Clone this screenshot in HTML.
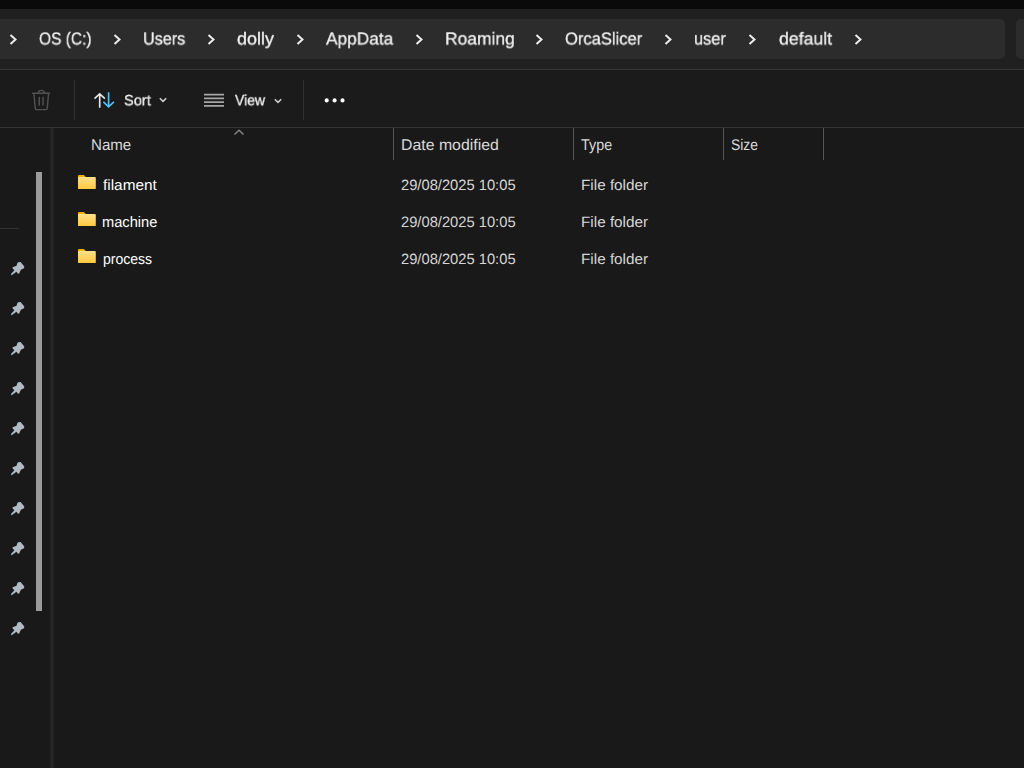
<!DOCTYPE html>
<html>
<head>
<meta charset="utf-8">
<title>default - File Explorer</title>
<style>
  html, body { margin: 0; padding: 0; }
  body {
    width: 1024px; height: 768px; overflow: hidden; position: relative;
    background: #191919;
    font-family: "Liberation Sans", sans-serif;
    color: #ffffff;
  }
  .abs { position: absolute; }
  .g { will-change: transform; -webkit-text-stroke: 0.3px #f4f4f4; }
  .t { position: absolute; white-space: nowrap; line-height: 1; transform-origin: 0 0; text-rendering: geometricPrecision; }

  /* top strips */
  #topblack { left: 0; top: 0; width: 1024px; height: 9px; background: #0a0a0a; }
  #addrstrip { left: 0; top: 9px; width: 1024px; height: 60px; background: #202020; }
  #addrbox { left: -8px; top: 19px; width: 1013px; height: 40px; background: #2c2c2c; border-radius: 5px; }
  #searchbox { left: 1015.5px; top: 19px; width: 20px; height: 40px; background: #2c2c2c; border-radius: 5px; }
  #addrline { left: 0; top: 69px; width: 1024px; height: 1px; background: #383838; }
  #toolbar { left: 0; top: 70px; width: 1024px; height: 57px; background: #1b1b1b; }
  #toolline { left: 0; top: 127px; width: 1024px; height: 1px; background: #343434; }

  /* breadcrumb */
  .bc { font-size: 18px; color: #f2f2f2; top: 30px; }
  .chev { position: absolute; top: 34.3px; width: 8px; height: 11px; }

  /* toolbar */
  .tb { font-size: 15px; color: #f2f2f2; top: 93px; }
  .vsep { position: absolute; top: 80px; width: 1px; height: 40px; background: #303030; }

  /* sidebar */
  #navdiv { left: 50px; top: 128px; width: 4px; height: 640px; background: linear-gradient(to right, #1d1d1d 0%, #252525 20%, #272727 50%, #262626 75%, #1f1f1f 100%); }
  #scroll { left: 36px; top: 172px; width: 6px; height: 439px; background: #9b9b9b; }
  #navline { left: 0; top: 228px; width: 19px; height: 1px; background: #323232; }
  .pin { position: absolute; left: 10px; width: 16px; height: 16px; }

  /* list */
  .hsep { position: absolute; top: 128px; width: 1px; height: 32px; background: #555555; }
  .hd { font-size: 15px; color: #dcdcdc; top: 137px; }
  .fn { font-size: 15px; color: #ffffff; }
  .dt { font-size: 15px; color: #d4d4d4; }
  .folder { position: absolute; left: 78px; width: 17.9px; height: 14.2px; }
</style>
</head>
<body>
<div class="abs" id="topblack"></div>
<div class="abs" id="addrstrip"></div>
<div class="abs" id="addrbox"></div>
<div class="abs" id="searchbox"></div>
<div class="abs" id="addrline"></div>
<div class="abs" id="toolbar"></div>
<div class="abs" id="toolline"></div>

<!-- breadcrumb -->
<svg class="chev" style="left:9px" viewBox="0 0 8 11"><path d="M1.5 1 L6.5 5.5 L1.5 10" fill="none" stroke="#ececec" stroke-width="2"/></svg>
<svg class="chev" style="left:113px" viewBox="0 0 8 11"><path d="M1.5 1 L6.5 5.5 L1.5 10" fill="none" stroke="#ececec" stroke-width="2"/></svg>
<svg class="chev" style="left:207px" viewBox="0 0 8 11"><path d="M1.5 1 L6.5 5.5 L1.5 10" fill="none" stroke="#ececec" stroke-width="2"/></svg>
<svg class="chev" style="left:296px" viewBox="0 0 8 11"><path d="M1.5 1 L6.5 5.5 L1.5 10" fill="none" stroke="#ececec" stroke-width="2"/></svg>
<svg class="chev" style="left:415px" viewBox="0 0 8 11"><path d="M1.5 1 L6.5 5.5 L1.5 10" fill="none" stroke="#ececec" stroke-width="2"/></svg>
<svg class="chev" style="left:535px" viewBox="0 0 8 11"><path d="M1.5 1 L6.5 5.5 L1.5 10" fill="none" stroke="#ececec" stroke-width="2"/></svg>
<svg class="chev" style="left:664px" viewBox="0 0 8 11"><path d="M1.5 1 L6.5 5.5 L1.5 10" fill="none" stroke="#ececec" stroke-width="2"/></svg>
<svg class="chev" style="left:748px" viewBox="0 0 8 11"><path d="M1.5 1 L6.5 5.5 L1.5 10" fill="none" stroke="#ececec" stroke-width="2"/></svg>
<svg class="chev" style="left:854px" viewBox="0 0 8 11"><path d="M1.5 1 L6.5 5.5 L1.5 10" fill="none" stroke="#ececec" stroke-width="2"/></svg>

<!-- toolbar -->
<svg class="abs" id="trash" style="left:31px;top:89px" width="20" height="22" viewBox="0 0 20 22">
  <path d="M1.500 4.300 H18.500 M7.200 4.300 C7.200 2.400 8.600 1.400 10.300 1.400 C12 1.400 13.400 2.400 13.400 4.300 M2.800 4.300 L4.300 19.300 A1.500 1.500 0 0 0 5.800 20.600 H14.700 A1.500 1.500 0 0 0 16.200 19.300 L17.600 4.300 M8.300 8.500 V16 M12 8.500 V16" fill="none" stroke="#525252" stroke-width="1.400" stroke-linecap="round"/>
</svg>
<div class="vsep" style="left:74px"></div>
<svg class="abs" id="sorticon" style="left:93px;top:91px" width="23" height="18" viewBox="0 0 23 18">
  <path d="M6.700 16.700 V3 M1.500 7.600 L6.700 2.800 L11.900 7.600" fill="none" stroke="#e6e6e6" stroke-width="1.650"/>
  <path d="M15.600 1.300 V15.800 M10.400 10.900 L15.600 15.900 L20.900 10.900" fill="none" stroke="#4cc2ff" stroke-width="1.650"/>
</svg>
<svg class="abs" style="left:159.100px;top:97.300px" width="8" height="6" viewBox="0 0 8 6"><path d="M0.800 1.200 L4 4.400 L7.200 1.200" fill="none" stroke="#d0d0d0" stroke-width="1.500"/></svg>
<svg class="abs" id="viewicon" style="left:204px;top:93px" width="20.200" height="15" viewBox="0 0 20.200 15">
  <path d="M0 1.600 H20.200 M0 5.400 H20.200 M0 9.100 H20.200 M0 12.900 H20.200" fill="none" stroke="#a6a6a6" stroke-width="1.700"/>
</svg>
<svg class="abs" style="left:273.900px;top:97.500px" width="8" height="6" viewBox="0 0 8 6"><path d="M0.800 1.200 L4 4.400 L7.200 1.200" fill="none" stroke="#d0d0d0" stroke-width="1.500"/></svg>
<div class="vsep" style="left:303px"></div>
<svg class="abs" id="dots" style="left:323px;top:97px" width="24" height="7" viewBox="0 0 24 7">
  <circle cx="3.700" cy="3.400" r="2.050" fill="#ffffff"/><circle cx="11.600" cy="3.400" r="2.050" fill="#ffffff"/><circle cx="19.500" cy="3.400" r="2.050" fill="#ffffff"/>
</svg>

<svg width="0" height="0" style="position:absolute">
  <defs>
    <linearGradient id="fg" x1="0" y1="0" x2="0" y2="1">
      <stop offset="0" stop-color="#ffe08a"/><stop offset="1" stop-color="#ffc93e"/>
    </linearGradient>
    <symbol id="folder" viewBox="0.8 0.2 18.2 14.4" preserveAspectRatio="none">
      <path d="M0.800 1.200 A1 1 0 0 1 1.800 0.200 H6.700 L8.900 2.300 H12 V6 H0.800 Z" fill="#efb000"/>
      <path d="M0.800 3.200 A1 1 0 0 1 1.800 2.200 H18 A1 1 0 0 1 19 3.200 V13.600 A1 1 0 0 1 18 14.600 H1.800 A1 1 0 0 1 0.800 13.600 Z" fill="url(#fg)"/>
    </symbol>
    <symbol id="pin" viewBox="0 0 16 16">
      <path d="M8.060 2.250 L10.600 1.900 L14.300 6.600 L14 8.200 L10.900 9.750 L9 13.800 L7.750 13.500 L6.400 11.800 L1.800 15.300 L0.800 14.200 L4.400 10.200 L2.300 8 L2.750 7.250 L6.500 5.700 L7.400 2.900 Z" fill="#b0bbc2"/>
    </symbol>
  </defs>
</svg>
<!-- sidebar -->
<div class="abs" id="navdiv"></div>
<div class="abs" id="scroll"></div>
<div class="abs" id="navline"></div>

<svg class="pin" style="top:260px"><use href="#pin"/></svg>
<svg class="pin" style="top:300px"><use href="#pin"/></svg>
<svg class="pin" style="top:340px"><use href="#pin"/></svg>
<svg class="pin" style="top:380px"><use href="#pin"/></svg>
<svg class="pin" style="top:420px"><use href="#pin"/></svg>
<svg class="pin" style="top:460px"><use href="#pin"/></svg>
<svg class="pin" style="top:500px"><use href="#pin"/></svg>
<svg class="pin" style="top:540px"><use href="#pin"/></svg>
<svg class="pin" style="top:580px"><use href="#pin"/></svg>
<svg class="pin" style="top:620px"><use href="#pin"/></svg>
<!-- headers -->
<svg class="abs" style="left:234px;top:128.600px" width="10" height="7" viewBox="0 0 10 7"><path d="M0.500 5.600 L5 1.200 L9.500 5.600" fill="none" stroke="#858585" stroke-width="1.400"/></svg>
<div class="hsep" style="left:393px"></div>
<div class="hsep" style="left:573px"></div>
<div class="hsep" style="left:723px"></div>
<div class="hsep" style="left:823px"></div>

<!-- rows -->
<svg class="folder" style="top:175.30px"><use href="#folder"/></svg>
<svg class="folder" style="top:212.15px"><use href="#folder"/></svg>
<svg class="folder" style="top:249.00px"><use href="#folder"/></svg>
<span class="t g" id="bc1" style="left:39.33px;top:30.00px;font-size:18px;color:#f4f4f4;transform:scale(0.8614,0.9661)">OS (C:)</span>
<span class="t g" id="bc2" style="left:142.94px;top:30.00px;font-size:18px;color:#f4f4f4;transform:scale(0.8989,0.9661)">Users</span>
<span class="t g" id="bc3" style="left:237.28px;top:30.00px;font-size:18px;color:#f4f4f4;transform:scale(0.9974,0.9661)">dolly</span>
<span class="t g" id="bc4" style="left:326.02px;top:30.00px;font-size:18px;color:#f4f4f4;transform:scale(0.9601,0.9661)">AppData</span>
<span class="t g" id="bc5" style="left:445.01px;top:30.00px;font-size:18px;color:#f4f4f4;transform:scale(0.9688,0.9661)">Roaming</span>
<span class="t g" id="bc6" style="left:565.39px;top:30.00px;font-size:18px;color:#f4f4f4;transform:scale(0.9192,0.9661)">OrcaSlicer</span>
<span class="t g" id="bc7" style="left:694.17px;top:30.00px;font-size:18px;color:#f4f4f4;transform:scale(0.9102,0.9661)">user</span>
<span class="t g" id="bc8" style="left:778.72px;top:30.00px;font-size:18px;color:#f4f4f4;transform:scale(0.9832,0.9661)">default</span>
<span class="t g" id="sort" style="left:123.68px;top:94.00px;font-size:16px;color:#f4f4f4;transform:scale(0.9125,0.9391)">Sort</span>
<span class="t g" id="view" style="left:235.12px;top:94.00px;font-size:16px;color:#f4f4f4;transform:scale(0.8740,0.9391)">View</span>
<span class="t" id="h1" style="left:90.95px;top:138.00px;font-size:16px;color:#dadada;transform:scale(0.9430,0.9719)">Name</span>
<span class="t" id="h2" style="left:400.68px;top:138.00px;font-size:16px;color:#dadada;transform:scale(0.9906,0.9719)">Date modified</span>
<span class="t" id="h3" style="left:581.05px;top:138.00px;font-size:16px;color:#dadada;transform:scale(0.8977,0.9719)">Type</span>
<span class="t" id="h4" style="left:730.68px;top:138.00px;font-size:16px;color:#dadada;transform:scale(0.8683,0.9719)">Size</span>
<span class="t" id="f1" style="left:102.84px;top:179.00px;font-size:16px;color:#ffffff;transform:scale(0.9602,0.9317)">filament</span>
<span class="t" id="d1" style="left:400.89px;top:179.00px;font-size:16px;color:#d6d6d6;transform:scale(0.9199,0.9317)">29/08/2025 10:05</span>
<span class="t" id="y1" style="left:580.55px;top:179.00px;font-size:16px;color:#d6d6d6;transform:scale(0.9553,0.9317)">File folder</span>
<span class="t" id="f2" style="left:101.93px;top:216.00px;font-size:16px;color:#ffffff;transform:scale(0.9140,0.9400)">machine</span>
<span class="t" id="d2" style="left:400.77px;top:216.00px;font-size:16px;color:#d6d6d6;transform:scale(0.9197,0.9400)">29/08/2025 10:05</span>
<span class="t" id="y2" style="left:580.55px;top:216.00px;font-size:16px;color:#d6d6d6;transform:scale(0.9553,0.9400)">File folder</span>
<span class="t" id="f3" style="left:102.88px;top:253.00px;font-size:16px;color:#ffffff;transform:scale(0.8767,0.9302)">process</span>
<span class="t" id="d3" style="left:400.77px;top:253.00px;font-size:16px;color:#d6d6d6;transform:scale(0.9197,0.9302)">29/08/2025 10:05</span>
<span class="t" id="y3" style="left:580.55px;top:253.00px;font-size:16px;color:#d6d6d6;transform:scale(0.9553,0.9302)">File folder</span>

</body>
</html>
